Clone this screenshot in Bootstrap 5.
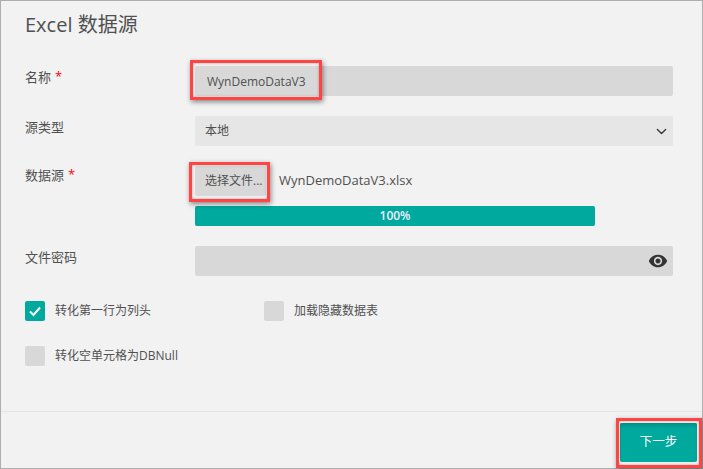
<!DOCTYPE html>
<html lang="zh-CN">
<head>
<meta charset="utf-8">
<title>Excel 数据源</title>
<link href="https://cdn.jsdelivr.net/npm/bootstrap@5.3.0/dist/css/bootstrap.min.css" rel="stylesheet">
<style>
html,body{height:469px;margin:0;overflow:hidden}
body{font-family:"Open Sans","Noto Sans CJK SC",sans-serif;background:#f2f2f2;color:#505050;font-size:12px}
.frame{position:relative;width:703px;height:469px;border:1px solid #aeaeae;background:#f2f2f2;display:flex;flex-direction:column}
.form-area{flex:1;padding:0 29px 0 24px}
.dlg-title{font-size:20px;font-weight:400;line-height:24px;margin:12px 0 29px;color:#505050}
.field-row{display:flex;margin-bottom:20px}
.field-label{width:170px;flex:none;font-size:13px;line-height:22px;color:#505050}
.label-up{margin-top:-2px}
.field-body{flex:1;min-width:0}
.req{color:#f00;margin-left:4px;line-height:1;position:relative;top:-1px}
.form-control.fld,.form-select.fld{height:30px;min-height:30px;border:0;border-radius:2px;font-size:12px;color:#505050;box-shadow:none;padding:0 10px}
.form-control.fld{background-color:#d8d8d8;padding-left:12px}
.form-select.fld{background-color:#e6e6e6;background-size:11px 11px;background-position:right 6px center}
.pick-btn{height:30px;background:#d8d8d8;border:0;border-radius:2px;color:#505050;font-size:12px;padding:0 5px 0 10px;width:71px;white-space:nowrap}
.file-name{font-size:13px;margin-left:13px}
.prog{width:400px;height:20px;margin-top:10px;border-radius:2px;background:#d8d8d8;font-size:12px}
.prog .progress-bar{background:#00a99d;font-weight:600;color:#eef}
.pw-wrap{position:relative}
.eye{position:absolute;right:5px;top:5px;width:20px;height:20px;fill:#333}
.check-row{display:flex;margin-top:25px;height:20px}
.check-row+.check-row{margin-top:25px}
.chk{width:239px;display:flex;align-items:center}
.box{width:20px;height:20px;border-radius:2px;background:#d8d8d8;flex:none;margin-right:10px;display:flex;align-items:center;justify-content:center}
.box.on{background:#00a99d}
.dlg-foot{height:57px;border-top:1px solid #e4e4e4;display:flex;justify-content:flex-end;align-items:flex-start;padding:11px 5px 0 0;flex:none}
.next-btn{width:77px;height:39px;background:#00a99d;border:0;border-radius:2px;color:#fff;font-size:12.5px;box-shadow:inset 0 4px 4px -2px #008a80;padding:0}
.annot{position:absolute;border:3px solid #ff4444;box-shadow:1px 2px 5px rgba(0,0,0,.45),inset 0 0 3px rgba(0,0,0,.3);pointer-events:none}
.a1{left:189px;top:59px;width:132px;height:40px}
.a2{left:188px;top:161px;width:81px;height:40px}
.a3{left:615px;top:417px;width:86px;height:50px}
</style>
</head>
<body>
<div class="frame">
  <div class="form-area">
    <h5 class="dlg-title">Excel 数据源</h5>
    <div class="field-row">
      <div class="field-label">名称<span class="req">*</span></div>
      <div class="field-body"><input class="form-control fld" value="WynDemoDataV3"></div>
    </div>
    <div class="field-row">
      <div class="field-label">源类型</div>
      <div class="field-body"><select class="form-select fld"><option>本地</option></select></div>
    </div>
    <div class="field-row">
      <div class="field-label label-up">数据源<span class="req">*</span></div>
      <div class="field-body">
        <div class="d-flex align-items-center">
          <button class="btn pick-btn" type="button">选择文件...</button>
          <span class="file-name">WynDemoDataV3.xlsx</span>
        </div>
        <div class="progress prog"><div class="progress-bar w-100">100%</div></div>
      </div>
    </div>
    <div class="field-row">
      <div class="field-label">文件密码</div>
      <div class="field-body pw-wrap">
        <input class="form-control fld" type="password">
        <svg class="eye" viewBox="0 0 24 24"><path d="M12 4.5C7 4.5 2.73 7.61 1 12c1.73 4.39 6 7.5 11 7.5s9.27-3.11 11-7.5c-1.73-4.39-6-7.5-11-7.5zM12 17c-2.76 0-5-2.24-5-5s2.24-5 5-5 5 2.24 5 5-2.24 5-5 5zm0-8c-1.66 0-3 1.34-3 3s1.34 3 3 3 3-1.34 3-3-1.34-3-3-3z"/></svg>
      </div>
    </div>
    <div class="check-row">
      <div class="chk"><span class="box on"><svg width="14" height="12" viewBox="0 0 14 12"><path d="M2 6.5l3.5 3.5L12 2.5" fill="none" stroke="#fff" stroke-width="2"/></svg></span>转化第一行为列头</div>
      <div class="chk"><span class="box"></span>加载隐藏数据表</div>
    </div>
    <div class="check-row">
      <div class="chk text-nowrap"><span class="box"></span>转化空单元格为DBNull</div>
    </div>
  </div>
  <div class="dlg-foot"><button class="btn next-btn" type="button">下一步</button></div>
  <div class="annot a1"></div>
  <div class="annot a2"></div>
  <div class="annot a3"></div>
</div>
<script src="https://cdn.jsdelivr.net/npm/bootstrap@5.3.0/dist/js/bootstrap.bundle.min.js"></script>
</body>
</html>
